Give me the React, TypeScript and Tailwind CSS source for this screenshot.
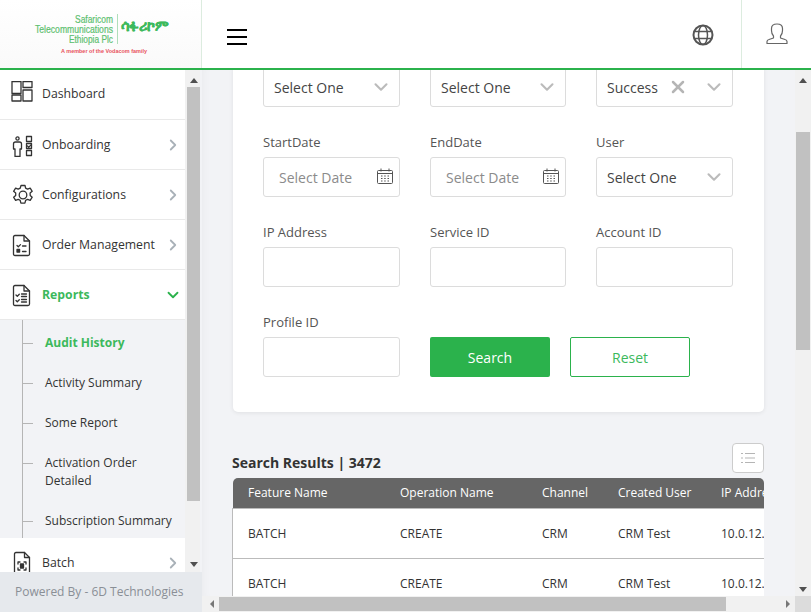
import React from "react";
import { ChevronRight, ChevronDown, X } from "lucide-react";

const Ic = ({ children }: { children: React.ReactNode }) => (
  <svg width="24" height="24" viewBox="0 0 24 24" fill="none" stroke="#333" strokeWidth="1.3" strokeLinejoin="round" strokeLinecap="round" className="shrink-0">
    {children}
  </svg>
);

const DashIcon = () => (
  <Ic>
    <rect x="1" y="0.5" width="9" height="12" />
    <rect x="12" y="0.5" width="9" height="6" />
    <rect x="1" y="14" width="9" height="6" />
    <rect x="12" y="9" width="9" height="11" />
  </Ic>
);
const OnbIcon = () => (
  <Ic>
    <circle cx="6.5" cy="5.5" r="1.6" />
    <path d="M2.5 16V11Q2.5 9 4.5 9H8.5Q10.5 9 10.5 11V16H9V23.5H4V16Z" />
    <rect x="15.5" y="3.5" width="5" height="5" />
    <rect x="15.5" y="10.5" width="5" height="5" />
    <rect x="15.5" y="17.5" width="5" height="5" />
    <path d="M16.5 13l1.2 1.2 2.6-2.6" />
  </Ic>
);
const GearIcon = () => (
  <Ic>
    <circle cx="12" cy="12" r="3.8" />
    <path d="M10 2.5h4l.6 2.7 2 1 2.6-1.1 2 3.2-2.1 1.8.1 2.3 2 1.8-2 3.2-2.6-1.1-2 1.1-.7 2.8h-4l-.7-2.8-2-1.1-2.6 1.1-2-3.2 2.1-1.8 0-2.3-2.1-1.8 2-3.2 2.6 1.1 2-1z" />
  </Ic>
);
const OrderIcon = () => (
  <Ic>
    <path d="M2.5 4Q2.5 2.5 4 2.5H13L18.5 8V21Q18.5 22.5 17 22.5H4Q2.5 22.5 2.5 21Z" />
    <path d="M13 2.5V8H18.5" />
    <path d="M6 12.5l1.3 1.3 2.2-2.2M11.5 13h3.5" />
    <rect x="6" y="16.5" width="2.6" height="2.6" fill="#333" />
    <path d="M11.5 18.5h3.5" />
  </Ic>
);
const ReportIcon = () => (
  <Ic>
    <path d="M2.5 4Q2.5 2.5 4 2.5H13L18.5 8V21Q18.5 22.5 17 22.5H4Q2.5 22.5 2.5 21Z" />
    <path d="M13 2.5V8H18.5" />
    <path d="M5 12l1.3 1.3 2-2M10.5 11h5M10.5 13.5h5" />
    <path d="M5 17.5l1.3 1.3 2-2M10.5 16.5h5M10.5 19h5" />
  </Ic>
);
const BatchIcon = () => (
  <Ic>
    <path d="M3.5 3Q3.5 1.5 5 1.5H13.5L18.5 6.5V24H3.5Z" />
    <path d="M13.5 1.5V6.5H18.5" />
    <path d="M7 13v-2h2M13 11h2v2M15 17v2h-2M9 19H7v-2" />
    <rect x="9.5" y="13" width="3" height="4" fill="#333" />
  </Ic>
);

const NavRow = ({ icon, label, active, open, clip, plain }: { icon: React.ReactNode; label: string; active?: boolean; open?: boolean; clip?: boolean; plain?: boolean }) => (
  <div className={`flex items-center w-[185px] bg-white shrink-0 pl-[11px] pr-[3px] ${clip ? "h-[34px] pt-[16px] overflow-hidden" : "h-[50px] border-b border-[#e9e9e9]"}`}>
    <div className={`w-[31px] shrink-0 ${plain ? "-mt-[4px]" : ""}`}>{icon}</div>
    <span className={`flex-1 text-[12.25px] ${plain || clip ? "" : "mt-[2px]"} ${plain ? "-mt-[1px]" : ""} ${active ? "font-bold text-[#3cb95c]" : "text-[#333]"}`}>{label}</span>
    {plain ? null : open ? (
      <ChevronDown size={18} strokeWidth={2.4} className="text-[#2bb24c]" />
    ) : (
      <ChevronRight size={18} strokeWidth={2.4} className="text-[#a9b1b8]" />
    )}
  </div>
);

const SubItem = ({ label, active, tall }: { label: React.ReactNode; active?: boolean; tall?: boolean }) => (
  <div className={`flex items-start ${tall ? "h-[58px]" : "h-[40px]"}`}>
    <div className="w-[10px] h-px bg-[#b5b5b5] mt-[11px] mr-[12px] shrink-0" />
    <span className={`text-[12px] leading-[18px] mt-[2px] ${active ? "font-bold text-[#3cb95c]" : "text-[#333]"}`}>{label}</span>
  </div>
);

const Arrow = ({ dir, cls }: { dir: "up" | "down" | "left" | "right"; cls?: string }) => {
  const p = { up: "0,8 4,3 8,8", down: "0,3 8,3 4,8", left: "7,0 7,8 3,4", right: "3,0 3,8 7,4" }[dir];
  return (
    <svg width="8" height="8" viewBox="0 0 8 8" className={cls}>
      <polygon points={p} fill={dir === "left" || dir === "right" ? "#777" : "#505050"} />
    </svg>
  );
};

const Field = ({ label, children, cls }: { label?: string; children: React.ReactNode; cls: string }) => (
  <div className={`${cls} flex flex-col`}>
    {label && <div className="text-[13px] text-[#555] h-[20px] mb-[5px] leading-[20px]">{label}</div>}
    <div className="h-[40px] bg-white border border-[#dcdcdc] rounded-[3px] flex items-center text-[14px]">{children}</div>
  </div>
);

const Sel = ({ label, w }: { label?: string; w: string }) => (
  <Field label={label} cls={w}>
    <span className="pl-[10px] flex-1 text-[#444]">Select One</span>
    <ChevronDown size={22} strokeWidth={2.3} className="text-[#bbbbbb] mr-[7px]" />
  </Field>
);

const DateF = ({ label, w }: { label: string; w: string }) => (
  <Field label={label} cls={w}>
    <span className="pl-[15px] flex-1 text-[#8b8b8b]">Select Date</span>
    <svg width="16" height="16" viewBox="0 0 16 16" fill="none" stroke="#555" strokeWidth="1" className="mr-[6px] -mt-[2px]">
      <rect x="0.5" y="2.5" width="15" height="13" rx="1" />
      <path d="M0.5 5.5h15M4 0.5v3M12 0.5v3" />
      <path d="M4 8h1.5M7.2 8h1.5M10.5 8H12M4 10.5h1.5M7.2 10.5h1.5M10.5 10.5H12M4 13h1.5M7.2 13h1.5M10.5 13H12" strokeWidth="1.2" />
    </svg>
  </Field>
);

const Inp = ({ label, w }: { label: string; w: string }) => (
  <Field label={label} cls={w}>
    <span />
  </Field>
);

const cells = "text-[12px] text-[#333] shrink-0";
const Row = () => (
  <div className="h-[50px] bg-white border-b border-[#bbbbbb] flex items-center pl-[15px] whitespace-nowrap">
    <span className={`${cells} w-[152px]`}>BATCH</span>
    <span className={`${cells} w-[142px]`}>CREATE</span>
    <span className={`${cells} w-[76px]`}>CRM</span>
    <span className={`${cells} w-[103px]`}>CRM Test</span>
    <span className={`${cells} w-[60px]`}>10.0.12.1</span>
  </div>
);

export default function App() {
  return (
    <div className="w-[811px] h-[612px] overflow-hidden flex flex-col bg-[#f2f3f6] font-['Open_Sans',sans-serif]">
      <header className="h-[70px] shrink-0 flex bg-white border-b-2 border-[#2bb24c]">
        <div className="w-[202px] shrink-0 border-r border-[#dcecdf] flex items-center justify-center bg-gradient-to-b from-white to-[#fafafa]">
          <svg width="140" height="44" viewBox="0 0 140 44">
            <g fill="#5cc06f" stroke="#5cc06f" strokeWidth="0.2" fontFamily="Liberation Sans, sans-serif" fontSize="10.5">
              <text x="44" y="10.5" textLength="38" lengthAdjust="spacingAndGlyphs">Safaricom</text>
              <text x="4" y="21" textLength="78" lengthAdjust="spacingAndGlyphs">Telecommunications</text>
              <text x="38" y="31" textLength="44" lengthAdjust="spacingAndGlyphs">Ethiopia Plc</text>
            </g>
            <rect x="86" y="2" width="0.7" height="30" fill="#8fd19e" />
            <text x="90" y="19" fontFamily="Noto Sans, DejaVu Sans, sans-serif" fontSize="14" fontWeight="700" fill="#3cb95c" stroke="#3cb95c" strokeWidth="0.25" textLength="48" lengthAdjust="spacingAndGlyphs">ሳፋሪኮም</text>
            <text x="30" y="41" fontFamily="Liberation Sans, sans-serif" fontSize="5" fontWeight="700" fill="#e8525c" textLength="86" lengthAdjust="spacingAndGlyphs">A member of the Vodacom family</text>
          </svg>
        </div>
        <div className="flex-1 flex items-center pl-[25px]">
          <div className="w-[20px] flex flex-col gap-[5px] mt-[5px]">
            <div className="h-[2px] bg-black" />
            <div className="h-[2px] bg-black" />
            <div className="h-[2px] bg-black" />
          </div>
        </div>
        <div className="w-[78px] flex items-center justify-center pl-[1px]">
          <svg width="22" height="22" viewBox="0 0 22 22" fill="none" stroke="#555" strokeWidth="2" className="mt-[2px]">
            <circle cx="11" cy="11" r="9.5" />
            <ellipse cx="11" cy="11" rx="4.5" ry="9.5" strokeWidth="1.5" />
            <path d="M2 7.5h18M2 14.5h18" strokeWidth="1.5" />
          </svg>
        </div>
        <div className="w-[70px] border-l border-[#dcecdf] flex items-center justify-center">
          <svg width="22" height="22" viewBox="0 0 22 22" fill="none" stroke="#666" strokeWidth="1.2" strokeLinejoin="round">
            <path d="M1 20.5V18.5Q1 17 3 16.5L7.5 15V13Q5.5 11 5.5 7.5V5.5Q5.5 1 11 1T16.5 5.5V7.5Q16.5 11 14.5 13V15L19 16.5Q21 17 21 18.5V20.5Z" />
          </svg>
        </div>
      </header>

      <div className="flex-1 flex min-h-0">
        <aside className="w-[202px] shrink-0 flex flex-col bg-[#f2f3f6]">
          <div className="flex-1 flex min-h-0">
            <nav className="w-[185px] flex flex-col overflow-hidden bg-[#f2f3f6]">
              <NavRow icon={<DashIcon />} label="Dashboard" plain />
              <NavRow icon={<OnbIcon />} label="Onboarding" />
              <NavRow icon={<GearIcon />} label="Configurations" />
              <NavRow icon={<OrderIcon />} label="Order Management" />
              <NavRow icon={<ReportIcon />} label="Reports" active open />
              <div className="h-[218px] shrink-0 ml-[22px] border-l border-[#b5b5b5] pt-[12px]">
                <SubItem label="Audit History" active />
                <SubItem label="Activity Summary" />
                <SubItem label="Some Report" />
                <SubItem label={<>Activation Order<br />Detailed</>} tall />
                <SubItem label="Subscription Summary" />
              </div>
              <NavRow icon={<BatchIcon />} label="Batch" clip />
            </nav>
            <div className="w-[15px] pl-[2px] bg-[#f1f1f1] flex flex-col items-center">
              <div className="h-[17px] flex items-center justify-center"><Arrow dir="up" /></div>
              <div className="w-[13px] h-[414px] bg-[#c1c1c1]" />
              <div className="flex-1 flex items-end justify-center pb-[5px]"><Arrow dir="down" /></div>
            </div>
          </div>
          <footer className="h-[40px] shrink-0 bg-[#e6e9ed] flex items-center pl-[15px] text-[12px] text-[#8a8f96]">Powered By - 6D Technologies</footer>
        </aside>

        <div className="flex-1 flex flex-col min-w-0">
          <div className="flex-1 flex min-h-0">
            <main className="flex-1 min-w-0 overflow-hidden pl-[30px] shadow-[inset_8px_0_8px_-6px_rgba(0,0,0,0.03)]">
              <section className="-mt-[3px] w-[531px] h-[345px] bg-white rounded-b-[5px] shadow-[0_1px_4px_rgba(0,0,0,0.08)] pt-0 pl-[30px] flex flex-col gap-[25px] ml-px">
                <div className="flex gap-[30px]">
                  <Sel w="w-[137px]" />
                  <Sel w="w-[136px]" />
                  <Field cls="w-[137px]">
                    <span className="pl-[10px] flex-1 text-[#444]">Success</span>
                    <X size={20} strokeWidth={3} className="text-[#b5b5b5] mr-[15px]" />
                    <ChevronDown size={22} strokeWidth={2.3} className="text-[#bbbbbb] mr-[7px]" />
                  </Field>
                </div>
                <div className="flex gap-[30px]">
                  <DateF label="StartDate" w="w-[137px]" />
                  <DateF label="EndDate" w="w-[136px]" />
                  <Sel label="User" w="w-[137px]" />
                </div>
                <div className="flex gap-[30px]">
                  <Inp label="IP Address" w="w-[137px]" />
                  <Inp label="Service ID" w="w-[136px]" />
                  <Inp label="Account ID" w="w-[137px]" />
                </div>
                <div className="flex gap-[30px] items-end">
                  <Inp label="Profile ID" w="w-[137px]" />
                  <div className="flex gap-[20px]">
                    <button className="w-[120px] h-[40px] bg-[#2bb24c] rounded-[2px] text-white text-[14px]">Search</button>
                    <button className="w-[120px] h-[40px] bg-white border border-[#2bb24c] rounded-[2px] text-[#3cb95c] text-[14px]">Reset</button>
                  </div>
                </div>
              </section>
              <div className="w-[532px] mt-[31px]">
                <div className="flex items-end justify-between h-[35px] pb-[5px]">
                  <span className="text-[14px] font-bold text-[#333] leading-[20px]">Search Results | 3472</span>
                  <div className="w-[32px] h-[30px] bg-white border border-[#cccccc] rounded-[4px] flex items-center justify-center">
                    <svg width="14" height="12" viewBox="0 0 14 12" fill="none" stroke="#b5b5b5" strokeWidth="1">
                      <path d="M4 1.5h10M4 6h10M4 10.5h10M0 1.5h2M0 6h2M0 10.5h2" />
                    </svg>
                  </div>
                </div>
                <div className="overflow-hidden">
                  <div className="h-[30px] bg-[#666666] rounded-t-[5px] flex items-center pl-[15px] text-[12px] text-white whitespace-nowrap ml-px">
                    <span className="w-[152px] shrink-0">Feature Name</span>
                    <span className="w-[142px] shrink-0">Operation Name</span>
                    <span className="w-[76px] shrink-0">Channel</span>
                    <span className="w-[103px] shrink-0">Created User</span>
                    <span className="w-[60px] shrink-0">IP Address</span>
                  </div>
                  <div className="border-l border-t border-[#bbbbbb]">
                    <Row />
                    <Row />
                  </div>
                </div>
              </div>
            </main>
            <div className="w-[16px] shrink-0 bg-[#f1f1f1] flex flex-col items-center">
              <div className="h-[17px] flex items-center justify-center"><Arrow dir="up" /></div>
              <div className="h-[45px]" />
              <div className="w-[14px] h-[218px] bg-[#c1c1c1]" />
              <div className="flex-1" />
              <div className="h-[17px] flex items-center justify-center"><Arrow dir="down" /></div>
            </div>
          </div>
          <div className="h-[16px] shrink-0 flex bg-[#f1f1f1]">
            <div className="w-[17px] flex items-center justify-center"><Arrow dir="left" /></div>
            <div className="w-[507px] h-[14px] mt-px bg-[#c1c1c1]" />
            <div className="flex-1" />
            <div className="w-[17px] flex items-center justify-center"><Arrow dir="right" /></div>
            <div className="w-[16px] bg-[#dcdcdc]" />
          </div>
        </div>
      </div>
    </div>
  );
}
